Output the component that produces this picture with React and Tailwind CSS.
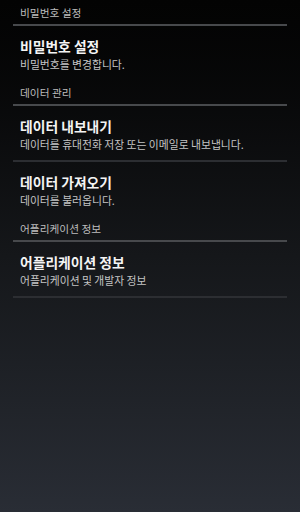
const sections = [
  {
    title: '비밀번호 설정',
    items: [{ title: '비밀번호 설정', summary: '비밀번호를 변경합니다.' }],
  },
  {
    title: '데이터 관리',
    items: [
      { title: '데이터 내보내기', summary: '데이터를 휴대전화 저장 또는 이메일로 내보냅니다.' },
      { title: '데이터 가져오기', summary: '데이터를 불러옵니다.' },
    ],
  },
  {
    title: '어플리케이션 정보',
    items: [{ title: '어플리케이션 정보', summary: '어플리케이션 및 개발자 정보' }],
  },
];

const font = { fontFamily: '"Noto Sans CJK KR", "Noto Sans", sans-serif' };

const CategoryHeader = ({ title }) => (
  <div className="h-[26px] flex flex-col justify-between">
    <div className="pt-[6px] px-[20px] text-[10.7px] leading-[14px] text-[#bdbdbd]">{title}</div>
    <div className="mx-[13px] h-[2px] bg-[#47494c]" />
  </div>
);

const PrefItem = ({ title, summary }) => (
  <div className="h-[54px] px-[20px] pt-[12px]">
    <div className="text-[13.8px] leading-[16px] font-bold text-[#f4f4f4]">{title}</div>
    <div className="mt-[3px] text-[10.8px] leading-[14px] text-[#c4c4c4]">{summary}</div>
  </div>
);

export default function App() {
  return (
    <div
      className="w-[300px] h-[512px] overflow-hidden bg-linear-to-b from-[#030303] via-[#15171a] to-[#292d35]"
      style={font}
    >
      {sections.map((section) => (
        <div key={section.title}>
          <CategoryHeader title={section.title} />
          {section.items.map((item, i) => (
            <div key={item.title}>
              <PrefItem {...item} />
              {/* divider only between items, and after the last item of the list */}
              {(i < section.items.length - 1 || section === sections[sections.length - 1]) && (
                <div className="mx-[13px] h-[2px] bg-[#2c2e32]" />
              )}
            </div>
          ))}
        </div>
      ))}
    </div>
  );
}
